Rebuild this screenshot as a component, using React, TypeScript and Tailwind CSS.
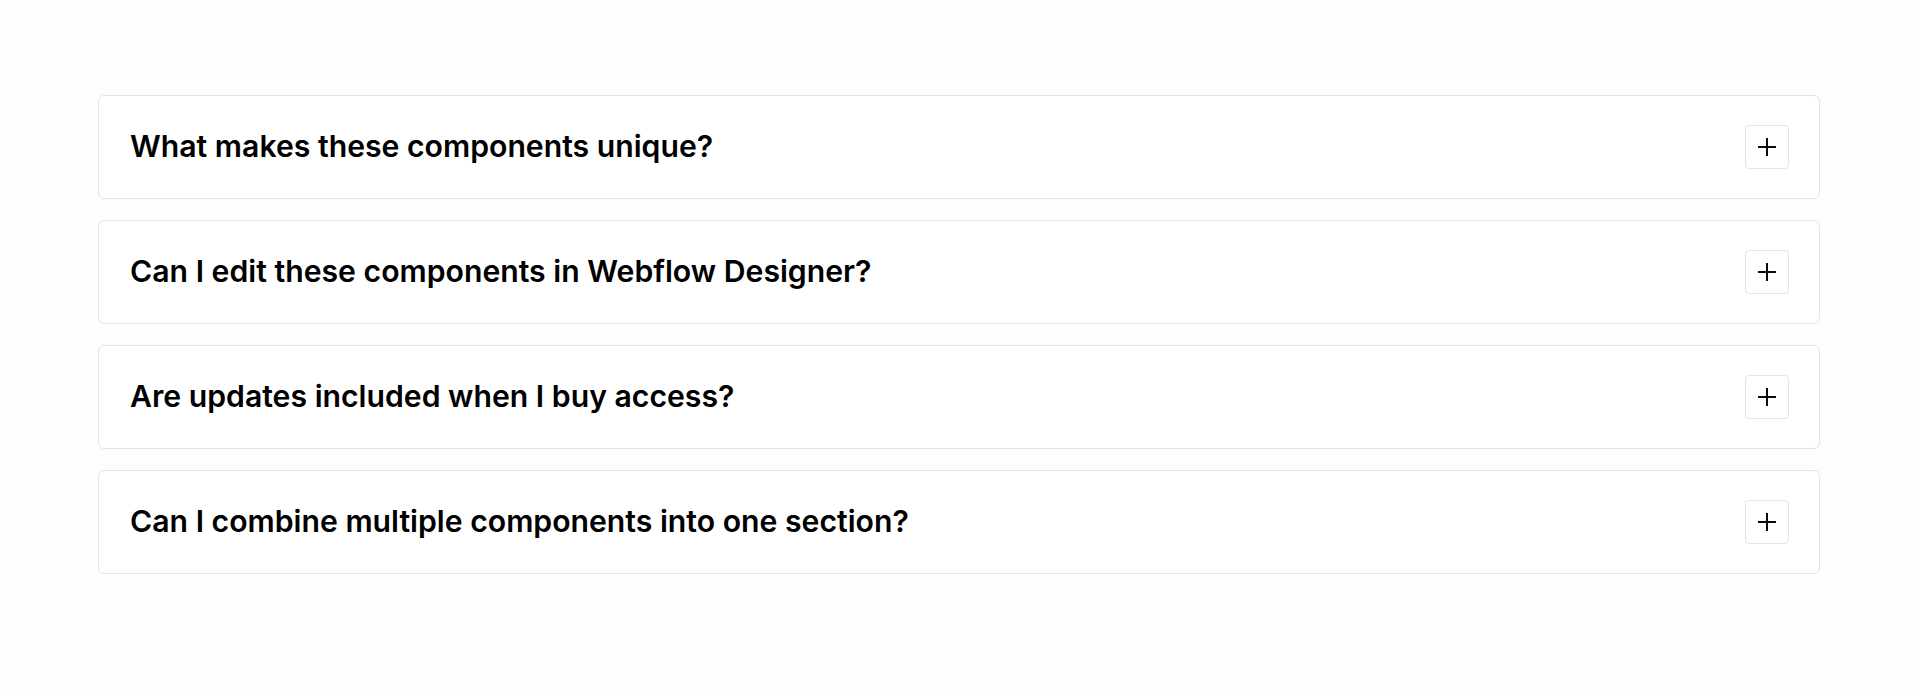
const FAQS = [
  "What makes these components unique?",
  "Can I edit these components in Webflow Designer?",
  "Are updates included when I buy access?",
  "Can I combine multiple components into one section?",
];

function PlusIcon() {
  return (
    <svg width="18" height="18" viewBox="0 0 18 18" fill="none">
      <path d="M9 0v18M0 9h18" stroke="#0a0a0a" strokeWidth="2" />
    </svg>
  );
}

export default function App() {
  return (
    <div
      className="min-h-[689px] w-full bg-[#fdfdfd] pl-[98px] pr-[100px] pt-[95px]"
      style={{ fontFamily: "Inter, 'Liberation Sans', sans-serif" }}
    >
      <div className="flex flex-col gap-[21px]">
        {FAQS.map((q) => (
          <div
            key={q}
            className="flex h-[104px] items-center justify-between rounded-md border border-[#e4e4e4] bg-white pl-[31px] pr-[30px]"
          >
            <h3 className="pb-[2px] text-[30.2px] font-semibold leading-none text-black">
              {q}
            </h3>
            <button className="flex h-[44px] w-[44px] items-center justify-center rounded-[4px] border border-[#e4e4e4] bg-white">
              <PlusIcon />
            </button>
          </div>
        ))}
      </div>
    </div>
  );
}
